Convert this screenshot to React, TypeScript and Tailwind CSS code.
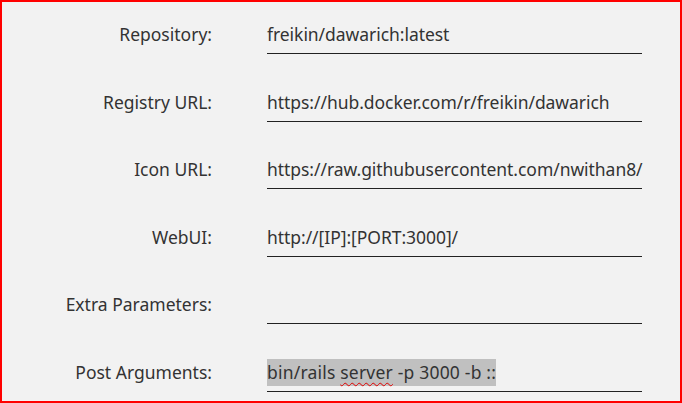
const rows: { label: string; value: string }[] = [
  { label: "Repository:", value: "freikin/dawarich:latest" },
  { label: "Registry URL:", value: "https://hub.docker.com/r/freikin/dawarich" },
  { label: "Icon URL:", value: "https://raw.githubusercontent.com/nwithan8/" },
  { label: "WebUI:", value: "http://[IP]:[PORT:3000]/" },
  { label: "Extra Parameters:", value: "" },
];

function Field(props: { label: string; children?: React.ReactNode }) {
  return (
    <div className="flex items-start h-[33px]">
      <label className="w-[210px] shrink-0 text-right leading-[27px]">{props.label}</label>
      <div className="ml-[55px] w-[375px] h-[33px] border-b border-[#222] leading-[27px] whitespace-nowrap tracking-[-0.05px]">
        {props.children}
      </div>
    </div>
  );
}

export default function App() {
  return (
    <div
      className="w-[682px] h-[403px] bg-[#f2f2f2] border-2 border-[#ff0000] text-[17.5px] text-[#333] overflow-hidden"
      style={{ fontFamily: '"Noto Sans", "Open Sans", sans-serif' }}
    >
      <div className="flex flex-col gap-[34.6px] pt-[19px]">
        {rows.map((r) => (
          <Field key={r.label} label={r.label}>
            {r.value}
          </Field>
        ))}
        <Field label="Post Arguments:">
          <span className="bg-[#c0c0c0] inline-block tracking-[0.2px]">
            bin/rails{" "}
            <span className="underline decoration-wavy decoration-[#e00000] decoration-1 underline-offset-[3px]">
              server
            </span>{" "}
            -p 3000 -b ::
          </span>
        </Field>
      </div>
    </div>
  );
}
